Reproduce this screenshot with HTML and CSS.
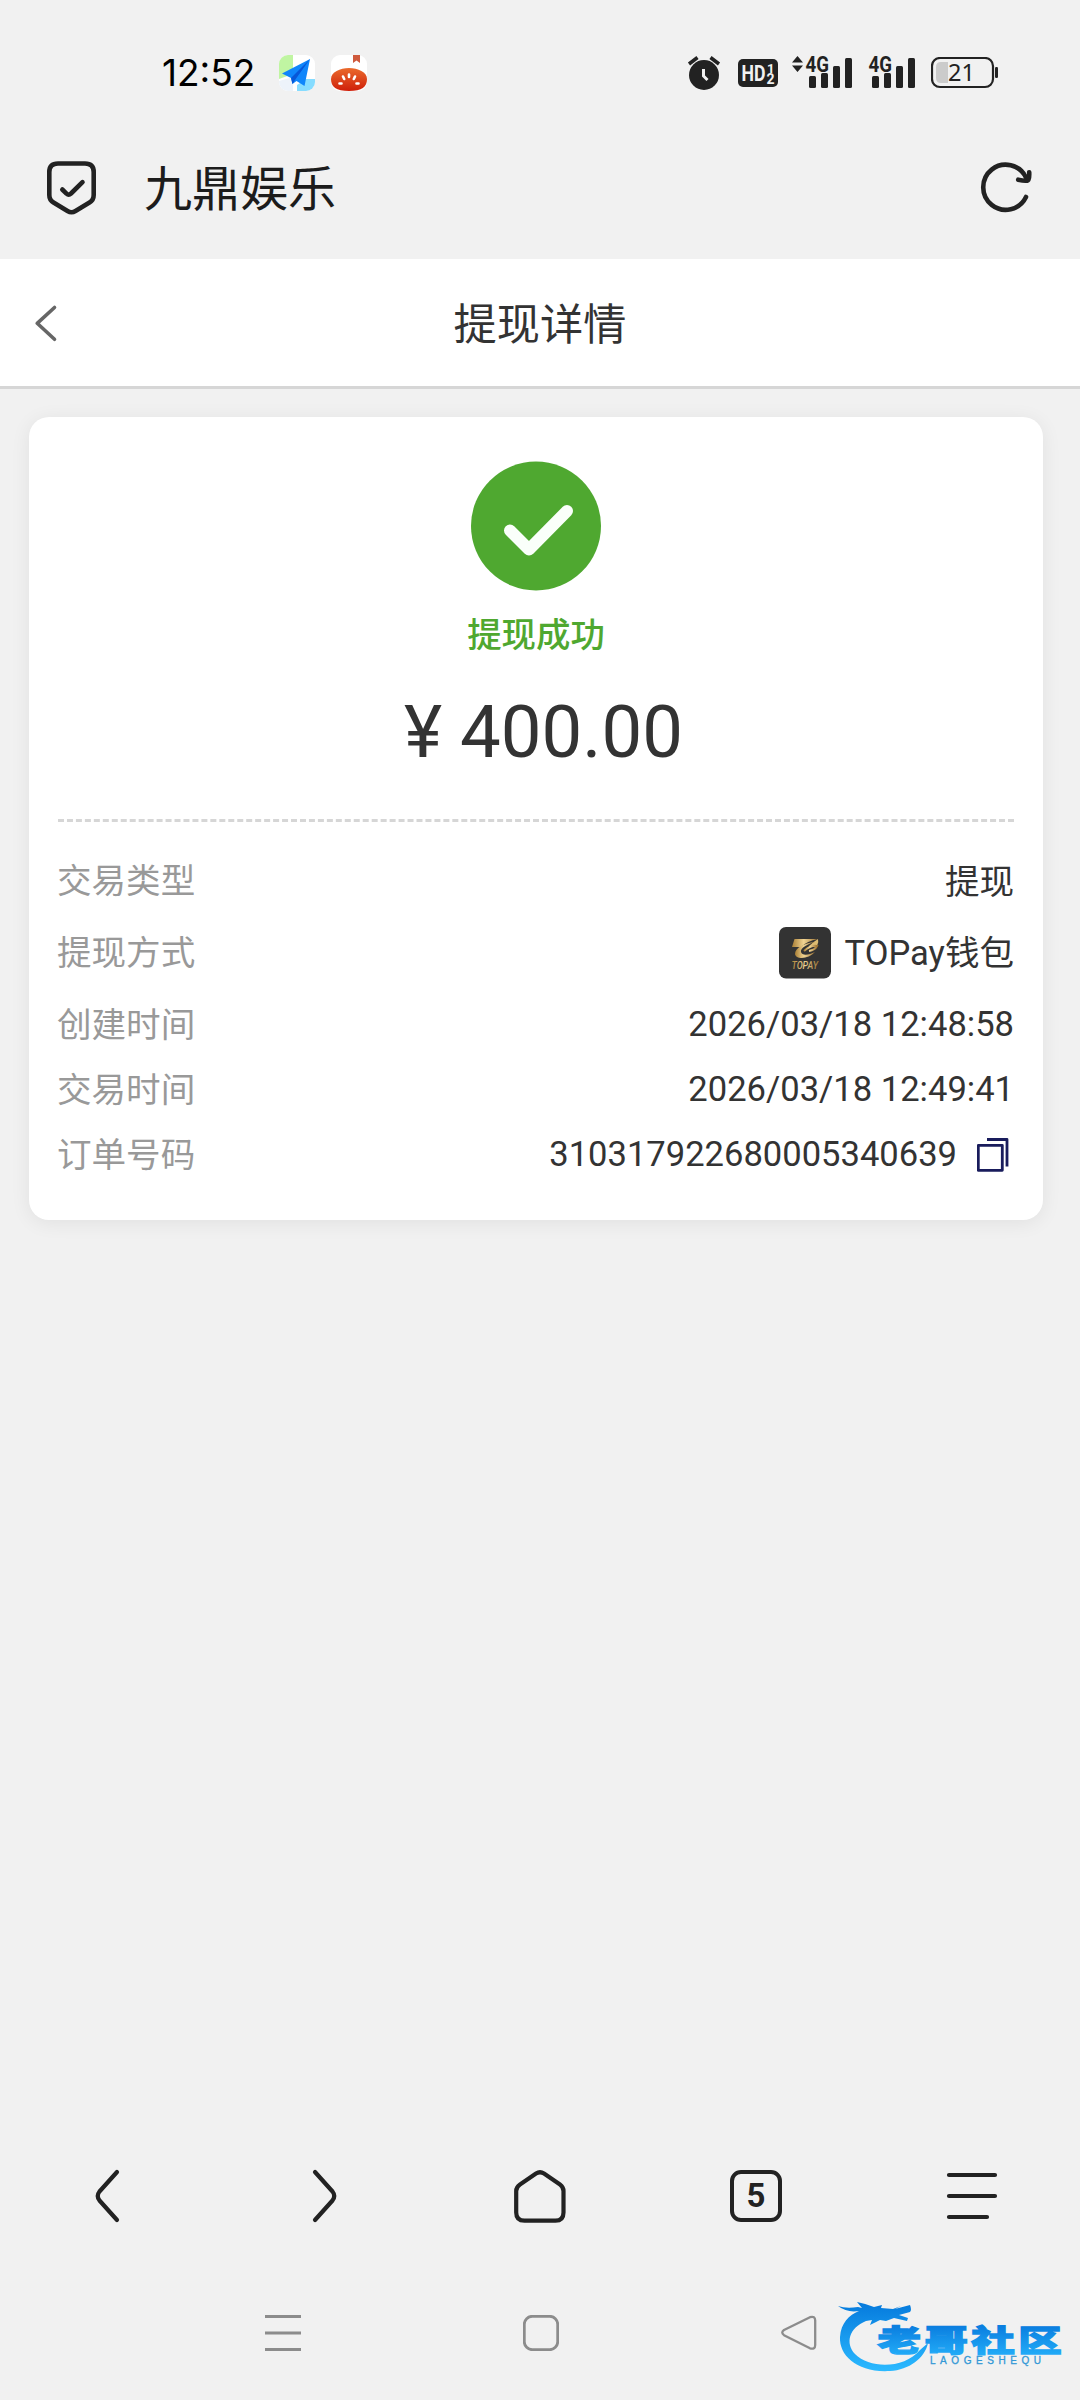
FILE: index.html
```html
<!DOCTYPE html>
<html lang="zh-CN">
<head>
<meta charset="utf-8">
<title>提现详情</title>
<link rel="stylesheet" href="styles.css">
</head>
<body>
<div class="screen">
  <header class="status">
    <span class="clock">12:52</span>
    <svg class="app-map" width="36" height="36" viewBox="0 0 36 36">
      <defs>
        <clipPath id="tile"><rect width="36" height="36" rx="9"/></clipPath>
        <linearGradient id="tomato" x1="0" y1="0" x2="0" y2="1"><stop offset="0" stop-color="#ea6a2c"/><stop offset="1" stop-color="#cf1f0a"/></linearGradient>
      </defs>
      <g clip-path="url(#tile)">
        <rect width="36" height="36" fill="#fff"/>
        <path d="M0 0H14V19L0 24Z" fill="#c0f5a2"/>
        <path d="M18 36V30L27 24H36V36Z" fill="#86dcff"/>
        <path d="M0 26L14 22V36H0Z" fill="#edf3fa"/>
      </g>
      <path d="M31 4L3 18.500L12 23L13.500 29L17.500 26L25.500 31Z" fill="#0f86fb"/>
      <path d="M31 4L12 23L13.500 29L16 25Z" fill="#0757d8"/>
    </svg>
    <svg class="app-tomato" width="36" height="36" viewBox="0 0 36 36">
      <rect width="36" height="36" rx="9" fill="#fff"/>
      <path d="M22 0H29V8L25.500 5.500L22 8Z" fill="#cf5a3d"/>
      <path d="M0 24C0 17 9 13 18 13S36 17 36 24C36 32 31 36 18 36S0 32 0 24Z" fill="url(#tomato)"/>
      <path d="M18 19.500V22M12 21.500L13.200 24M24 21.500L22.800 24M8.500 28.500H10.500M27.500 28.500H25.500" stroke="#fff" stroke-width="2.600" stroke-linecap="round"/>
    </svg>
    <div class="status-right">
      <svg class="alarm" width="34" height="36" viewBox="687 54 34 36">
        <circle cx="704" cy="74" r="15" fill="#222"/>
        <path d="M689 63L697.500 56.500M719 63L710.500 56.500" stroke="#222" stroke-width="3.600"/>
        <path d="M703.500 68V75L707.500 79" fill="none" stroke="#f1f1f1" stroke-width="3"/>
      </svg>
      <svg class="hd" width="40" height="28" viewBox="738 59 40 28">
        <rect x="738" y="59" width="40" height="28" rx="5" fill="#222"/>
        <g fill="#f1f1f1" class="badge-text">
          <text x="741.500" y="81" font-size="22" textLength="24" lengthAdjust="spacingAndGlyphs">HD</text>
          <text x="767" y="72.500" font-size="13">1</text>
          <text x="766.500" y="84" font-size="14">2</text>
        </g>
      </svg>
      <svg class="signal-a" width="62" height="44" viewBox="791 49 62 44" fill="#222">
        <path d="M792 61.500L797.500 55L803 61.500ZM792 64.500H803L797.500 71Z"/>
        <text class="badge-text" x="805.500" y="70.500" font-size="21.500" textLength="23.500" lengthAdjust="spacingAndGlyphs">4G</text>
        <rect x="809" y="75" width="7" height="12" rx="1.500"/><rect x="821" y="72" width="7" height="15" rx="1.500"/><rect x="833" y="65" width="7" height="22" rx="1.500"/><rect x="845" y="57" width="7" height="30" rx="1.500"/>
      </svg>
      <svg class="signal-b" width="50" height="44" viewBox="867 49 50 44" fill="#222">
        <text class="badge-text" x="868.500" y="70.500" font-size="21.500" textLength="23.500" lengthAdjust="spacingAndGlyphs">4G</text>
        <rect x="872" y="75" width="7" height="12" rx="1.500"/><rect x="884" y="72" width="7" height="15" rx="1.500"/><rect x="896" y="65" width="7" height="22" rx="1.500"/><rect x="908" y="57" width="7" height="30" rx="1.500"/>
      </svg>
      <svg class="battery" width="68" height="32" viewBox="931 57 68 32">
        <rect x="932" y="58" width="61" height="29" rx="8" fill="none" stroke="#222" stroke-width="2.200"/>
        <path d="M948 62H941Q936 62 936 67V78Q936 83 941 83H948Z" fill="#cbcbcb"/>
        <rect x="995" y="67" width="3" height="11" rx="1.200" fill="#222"/>
        <text class="battery-text" x="948" y="81" font-size="23.500" fill="#222">21</text>
      </svg>
    </div>
  </header>

  <div class="address">
    <svg width="52" height="56" viewBox="46 160 52 56" fill="none" stroke="#222" stroke-width="4.600" stroke-linecap="round" stroke-linejoin="round">
      <path d="M58 163.500H85Q93.700 163.500 93.700 172V195Q93.700 200 89.500 202.500L75.500 211Q71.500 213.500 67.500 211L53.500 202.500Q49.300 200 49.300 195V172Q49.300 163.500 58 163.500Z"/>
      <path d="M62.300 189.500L66.500 193.600Q68.700 195.600 71 193.500L82.500 182.200"/>
    </svg>
    <span class="site">九鼎娱乐</span>
    <svg class="reload" width="54" height="54" viewBox="979 160 54 54" fill="none" stroke="#222" stroke-width="4.600" stroke-linecap="round" stroke-linejoin="round">
      <path d="M1026 196A22.500 22.500 0 1 1 1026 176.500"/>
      <path d="M1018.200 178.700Q1028 181 1028.500 178.500Q1029.500 176 1029.200 171.200"/>
    </svg>
  </div>

  <div class="titlebar">
    <svg width="24" height="40" viewBox="34 302 24 40" fill="none" stroke="#666" stroke-width="3.600" stroke-linecap="round" stroke-linejoin="round"><path d="M54.500 306.500L37.200 322.300L54.500 338.300"/></svg>
    <h1>提现详情</h1>
  </div>

  <main class="page">
    <section class="card">
      <svg class="success" width="130" height="130" viewBox="0 0 130 130">
        <ellipse cx="65" cy="65" rx="65" ry="64.500" fill="#4fa830"/>
        <path d="M39 69.500L58 88.500L96 50" fill="none" stroke="#fafffa" stroke-width="12" stroke-linecap="round" stroke-linejoin="round"/>
      </svg>
      <p class="state">提现成功</p>
      <p class="amount"><span class="yen">¥</span><span>400.00</span></p>
      <dl class="details">
        <div class="row"><dt>交易类型</dt><dd>提现</dd></div>
        <div class="row row-tall"><dt>提现方式</dt><dd>
          <svg class="wallet" width="52" height="52" viewBox="0 0 52 52">
            <defs><linearGradient id="gold"><stop offset="0" stop-color="#a97f35"/><stop offset=".45" stop-color="#f1d493"/><stop offset="1" stop-color="#9b7131"/></linearGradient></defs>
            <rect width="52" height="51.500" rx="7" fill="#333"/>
            <path d="M13 20L15.500 12H39Q28 14 22 20Z" fill="url(#gold)"/>
            <path d="M39 12Q40 15 38 19H30Q34 15 39 12Z" fill="#dcbb72"/>
            <path d="M36 15C25 16 16 21 16 27C17 33 30 32 36 25C30 28 23 29 22 25C21 21 29 17 36 15Z" fill="url(#gold)"/>
            <path d="M25 24Q32 18 38 19Q36 23 30 24" fill="none" stroke="url(#gold)" stroke-width="2"/>
            <text x="12.500" y="42" font-size="10" textLength="26.500" lengthAdjust="spacingAndGlyphs" fill="url(#gold)" class="wallet-text">TOPAY</text>
          </svg>
          <span>TOPay钱包</span></dd></div>
        <div class="row"><dt>创建时间</dt><dd>2026/03/18 12:48:58</dd></div>
        <div class="row row-short"><dt>交易时间</dt><dd>2026/03/18 12:49:41</dd></div>
        <div class="row row-last"><dt>订单号码</dt><dd><span>310317922680005340639</span>
          <svg class="copy" width="32" height="34" viewBox="977 1139 32 34" fill="none" stroke="#191c5c" stroke-width="2.800" stroke-linejoin="round"><rect x="978.300" y="1146.300" width="24" height="25"/><path d="M987 1140.500H1007V1167.500"/></svg>
        </dd></div>
      </dl>
    </section>
  </main>

  <nav class="toolbar">
    <svg width="60" height="60" viewBox="78 2166 60 60"><path d="M117 2172L99.500 2191.500Q96 2196 99.500 2200.500L117 2220"/></svg>
    <svg width="60" height="60" viewBox="294 2166 60 60"><path d="M315 2172L332.500 2191.500Q336 2196 332.500 2200.500L315 2220"/></svg>
    <svg width="60" height="60" viewBox="510 2166 60 60"><path d="M536 2173.500Q540 2171 544 2173.500L560 2184.500Q563.500 2187 563.500 2191V2212.500Q563.500 2220.700 555.500 2220.700H524.500Q516.200 2220.700 516.200 2212.500V2191Q516.200 2187 520 2184.500Z"/></svg>
    <div class="tabs">5</div>
    <svg width="60" height="60" viewBox="942 2166 60 60"><path d="M949 2175H995M949 2196H995M949 2217H987"/></svg>
  </nav>

  <nav class="system">
    <svg width="36" height="36" viewBox="0 0 36 36"><path d="M0 1.500H36M0 18H36M0 34.500H36"/></svg>
    <svg width="36" height="36" viewBox="0 0 36 36"><rect x="1.300" y="1.300" width="33.400" height="33.400" rx="8"/></svg>
    <svg width="36" height="36" viewBox="781 2316 36 36"><path d="M810 2318.200L784 2331Q780.500 2333.500 784 2336.200L810 2349.300Q815.200 2350.800 815.200 2346V2321.500Q815.200 2316.700 810 2318.200Z" stroke-width="2.300"/></svg>
  </nav>

  <svg class="watermark" width="232" height="80" viewBox="834 2296 232 80">
    <defs>
      <linearGradient id="blue" gradientUnits="userSpaceOnUse" x1="0" y1="2304" x2="0" y2="2370"><stop offset="0" stop-color="#067bdd"/><stop offset="1" stop-color="#2bb9ff"/></linearGradient>
      <linearGradient id="bluetext" x1="0" y1="0" x2="0" y2="1"><stop offset=".25" stop-color="#0b7fe0"/><stop offset="1" stop-color="#25b2fb"/></linearGradient>
    </defs>
    <path fill="url(#blue)" d="M838 2306Q846 2309 858 2307L862 2308L857 2302Q867 2304 874 2307L882 2305L881 2308L893 2309L901 2306L895 2309L910 2305Q912 2310 910 2312L899 2315L908 2318L907 2321L894 2318L886 2321L880 2320L870 2325L872 2320L866 2321C849 2328 845 2343 855 2354C870 2369 904 2369 920 2350L928 2343C925 2358 909 2370 890 2371C858 2373 839 2356 840 2337C841 2323 849 2315 859 2311Q847 2313 838 2306Z"/>
    <g transform="translate(877.500 2350.500) scale(1.450 1)">
      <text class="brand" x="0" y="0" font-size="30" textLength="127" lengthAdjust="spacing" fill="url(#bluetext)" stroke="url(#bluetext)" stroke-width="1.300">老哥社区</text>
    </g>
    <text class="brand-latin" x="930" y="2364" font-size="10" textLength="111" lengthAdjust="spacing" fill="#3298d6" stroke="#3298d6" stroke-width=".3">LAOGESHEQU</text>
  </svg>
</div>
</body>
</html>
```
FILE: styles.css
```css
* { box-sizing: border-box; }
body {
  margin: 0;
  background: #f1f1f1;
  color: #333;
  font-family: Roboto, "Noto Sans CJK SC", sans-serif;
}
svg { display: block; flex: none; }
h1, p, dl, dt, dd { margin: 0; font-weight: 400; }
.screen {
  position: relative;
  width: 1080px;
  height: 2400px;
  display: flex;
  flex-direction: column;
  overflow: hidden;
}

.status { height: 130px; padding: 18px 81px 2px 162px; display: flex; align-items: center; }
.clock { width: 117px; font: 400 37px/36px Inter, sans-serif; color: #000; }
.app-map { margin-right: 16px; }
.status-right { margin-left: auto; display: flex; align-items: center; }
.alarm { margin-right: 17px; }
.hd { margin-right: 13px; }
.signal-a { margin-right: 14px; }
.signal-b { margin-right: 14px; }
.signal-a, .signal-b { margin-top: -2px; }
.badge-text { font-family: Roboto, sans-serif; font-weight: 700; }
.battery-text { font-family: "Noto Sans", sans-serif; }

.address { height: 129px; padding: 0 47px 13px 46px; display: flex; align-items: center; }
.site { margin-left: 46px; padding-top: 4px; font-size: 48px; line-height: 60px; color: #1c1c1c; }
.reload { margin-left: auto; }

.titlebar {
  height: 130px;
  padding: 0 34px;
  display: grid;
  grid-template-columns: 24px 1fr 24px;
  align-items: center;
  background: #fff;
  border-bottom: 3px solid #d6d6d6;
}
.titlebar h1 { padding-top: 6px; text-align: center; font-size: 43.2px; line-height: 60px; }

.page { flex: 1; padding: 28px 37px 0 29px; }
.card {
  height: 803px;
  padding: 43px 29px 0;
  display: flex;
  flex-direction: column;
  align-items: center;
  background: #fff;
  border-radius: 20px;
  box-shadow: 0 3px 20px rgba(0, 0, 0, .07);
}
.success { margin-top: 1px; }
.state { margin-top: 19px; font-size: 34.4px; line-height: 50px; font-weight: 500; color: #4fa830; }
.amount { margin-top: 28px; padding-left: 15px; display: flex; gap: 18px; font-size: 72.5px; line-height: 90px; }
.details { width: 956px; margin-top: 41px; padding-top: 21px; border-top: 3px dashed #d6d6d6; font-size: 34.56px; }
.row { height: 72px; display: flex; justify-content: space-between; align-items: center; }
.row dt { margin: -2px 0 0 -1px; color: #999; }
.row dd { display: flex; align-items: center; }
.row:nth-child(n+3) dd { padding-top: 2px; }
.row-short { height: 58px; }
.row-last { height: 72px; }
.row-tall span { margin-top: -2px; }
.wallet { margin: 4px 14px 0 0; }
.copy { margin: 1px 5px 0 20px; }
.wallet-text { font-family: Roboto, sans-serif; font-weight: 500; font-style: italic; }

.toolbar { height: 138px; display: grid; grid-template-columns: repeat(5, 216px); place-items: center; }
.toolbar path { fill: none; stroke: #222; stroke-width: 4.2px; stroke-linecap: round; stroke-linejoin: round; }
.tabs {
  width: 52px;
  height: 52px;
  border: 4px solid #222;
  border-radius: 11px;
  font-size: 33px;
  font-weight: 700;
  line-height: 44px;
  text-align: center;
  color: #222;
}
.system { height: 135px; padding: 1px 263px 0 265px; display: flex; justify-content: space-between; align-items: center; }
.system svg { fill: none; stroke: #8c8c8c; stroke-width: 2.8px; stroke-linejoin: round; }
.watermark { position: absolute; left: 834px; top: 2296px; }
.brand { font-family: "Noto Sans CJK SC", sans-serif; font-weight: 900; }
.brand-latin { font-family: "Liberation Sans", sans-serif; }
```
